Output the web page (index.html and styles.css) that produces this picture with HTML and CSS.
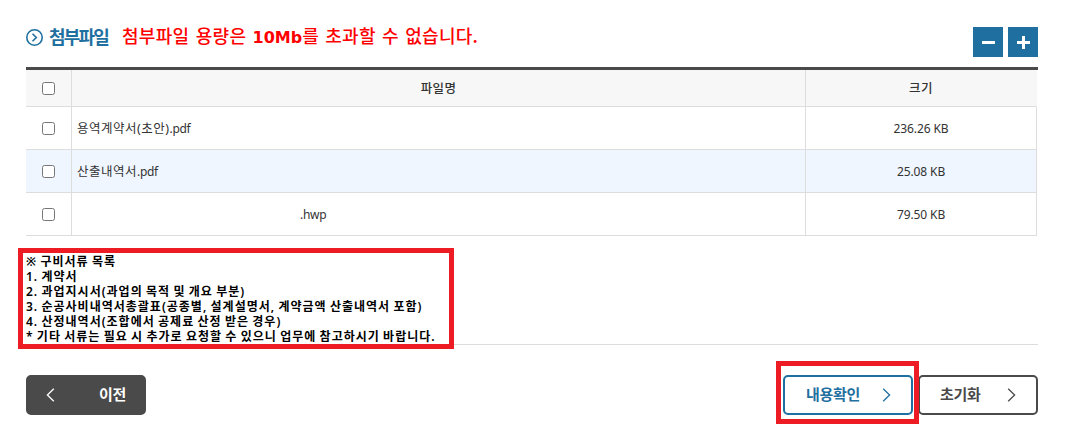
FILE: index.html
```
<!DOCTYPE html>
<html lang="ko">
  <head>
    <meta charset="utf-8">
    <title>첨부파일</title>
    <link rel="stylesheet" href="styles.css">
  </head>
  <body>
    <div class="container">
      <div class="file-header">
        <svg class="bullet" width="17" height="17" viewBox="0 0 17 17">
          <circle cx="8.5" cy="8.5" r="7.7" />
          <path d="M6.5 4.8L10.3 8.5L6.5 12.2" />
        </svg>
        <h2>첨부파일</h2>
        <p class="warning">첨부파일 용량은 <b>10Mb</b>를 초과할 수 없습니다.</p>
        <div class="file-buttons">
          <button type="button" aria-label="파일 삭제">
            <svg width="30" height="30"><path d="M9 15.5h13" /></svg>
          </button>
          <button type="button" aria-label="파일 추가">
            <svg width="30" height="30"><path d="M9 15.5h13M15.5 9v13" /></svg>
          </button>
        </div>
      </div>

      <div class="table-wrap">
        <table>
          <thead>
            <tr>
              <th class="check"><input type="checkbox"></th>
              <th class="name">파일명</th>
              <th class="size">크기</th>
            </tr>
          </thead>
          <tbody>
            <tr>
              <td class="check"><input type="checkbox"></td>
              <td class="name">용역계약서(초안)<span class="ext">.pdf</span></td>
              <td class="size">236.26 KB</td>
            </tr>
            <tr class="even">
              <td class="check"><input type="checkbox"></td>
              <td class="name">산출내역서<span class="ext">.pdf</span></td>
              <td class="size">25.08 KB</td>
            </tr>
            <tr>
              <td class="check"><input type="checkbox"></td>
              <td class="name hidden-name"><span class="ext">.hwp</span></td>
              <td class="size">79.50 KB</td>
            </tr>
          </tbody>
        </table>
      </div>

      <div class="notes">
        <p>※ 구비서류 목록</p>
        <p>1. 계약서</p>
        <p>2. 과업지시서(과업의 목적 및 개요 부분)</p>
        <p>3. 순공사비내역서총괄표(공종별, 설계설명서, 계약금액 산출내역서 포함)</p>
        <p>4. 산정내역서(조합에서 공제료 산정 받은 경우)</p>
        <p>* 기타 서류는 필요 시 추가로 요청할 수 있으니 업무에 참고하시기 바랍니다.</p>
        <div class="mark notes-mark"></div>
      </div>

      <div class="actions">
        <button type="button" class="btn prev">
          <svg width="9" height="14" viewBox="0 0 9 14"><path d="M7.8 0.8L1.4 7L7.8 13.2" /></svg>
          <span>이전</span>
        </button>
        <div class="confirm-wrap">
          <button type="button" class="btn confirm">
            <span>내용확인</span>
            <svg width="9" height="14" viewBox="0 0 9 14"><path d="M1.2 0.8L7.6 7L1.2 13.2" /></svg>
          </button>
          <div class="mark confirm-mark"></div>
        </div>
        <button type="button" class="btn reset">
          <span>초기화</span>
          <svg width="9" height="14" viewBox="0 0 9 14"><path d="M1.2 0.8L7.6 7L1.2 13.2" /></svg>
        </button>
      </div>
    </div>
  </body>
</html>
```
FILE: styles.css
```
* {
  box-sizing: border-box;
}
body {
  margin: 0;
  background-color: #fff;
  color: #333;
  font-family: "Noto Sans", "Noto Sans CJK KR", sans-serif;
  font-size: 12px;
}
h2,
p {
  margin: 0;
}
button {
  padding: 0;
  border: 0;
  font-family: inherit;
}
svg {
  display: block;
  fill: none;
}
.container {
  width: 1012px;
  min-height: 433px;
  margin-left: 26px;
}

/* title row */
.file-header {
  display: flex;
  align-items: flex-start;
  height: 67px;
  padding-top: 27px;
}
.bullet {
  margin-top: 2px;
  stroke: #1f70a0;
  stroke-width: 1.6;
}
h2 {
  width: 73px;
  margin-left: 6px;
  color: #1f70a0;
  font-size: 18px;
  line-height: 20px;
  letter-spacing: -1.8px;
  white-space: nowrap;
}
.warning {
  margin-top: -2px;
  color: #f00;
  font-family: "Noto Sans CJK KR", sans-serif;
  font-size: 18px;
  font-weight: 500;
  line-height: 20px;
  letter-spacing: 0.3px;
  word-spacing: 0.9px;
  white-space: nowrap;
}
.warning b {
  font-family: "DejaVu Sans", sans-serif;
  font-size: 16px;
  letter-spacing: 0;
}
.file-buttons {
  display: flex;
  gap: 5px;
  margin-left: auto;
}
.file-buttons button {
  width: 30px;
  height: 30px;
  background-color: #1f70a0;
}
.file-buttons svg {
  stroke: #fff;
  stroke-width: 3;
}

/* file list */
.table-wrap {
  border-top: 3px solid #4a4a4a;
}
table {
  width: 1011px;
  border-collapse: separate;
  border-spacing: 0;
  table-layout: fixed;
}
th,
td {
  height: 43px;
  padding: 0;
  border-right: 1px solid #ddd;
  border-bottom: 1px solid #ddd;
  text-align: center;
}
th {
  height: 37px;
  background-color: #f7f7f7;
  font-size: 12.5px;
  font-weight: 500;
  line-height: 16px;
  letter-spacing: 0.4px;
}
th.name,
th.size,
td.name {
  padding-top: 2px;
}
th.size {
  border-right-color: #f7f7f7;
}
.check {
  width: 46px;
}
.size {
  width: 231px;
}
td.name {
  padding-left: 5px;
  font-size: 12.5px;
  line-height: 16px;
  letter-spacing: 0.5px;
  text-align: left;
}
td.size,
.ext {
  font-size: 12px;
  letter-spacing: -0.1px;
}
td .ext {
  letter-spacing: -0.3px;
}
td.hidden-name {
  padding-left: 228px;
}
.even td {
  background-color: #eff6ff;
}
input {
  display: block;
  width: 13px;
  height: 13px;
  margin: 0 auto;
}

/* required documents */
.notes {
  position: relative;
  height: 109px;
  padding-top: 18px;
  border-bottom: 1px solid #ddd;
  color: #000;
  font-weight: 600;
  line-height: 15px;
  letter-spacing: 1px;
  word-spacing: -0.8px;
  white-space: nowrap;
}
.mark {
  position: absolute;
  border: 5px solid #ed1c24;
}
.notes-mark {
  top: 12px;
  left: -8px;
  width: 436px;
  height: 101px;
}

/* bottom buttons */
.actions {
  display: flex;
  padding-top: 30px;
}
.btn {
  display: flex;
  align-items: center;
  justify-content: space-between;
  height: 40px;
  padding-bottom: 3px;
  border: 2px solid #4a4a4a;
  border-radius: 5px;
  background-color: #fff;
  color: #4a4a4a;
  font-size: 15px;
  font-weight: 700;
  letter-spacing: -0.3px;
}
.btn svg {
  margin-top: 3px;
  stroke: currentColor;
  stroke-width: 1.3;
}
.prev {
  width: 120px;
  padding-right: 18px;
  padding-left: 18px;
  background-color: #4a4a4a;
  color: #fff;
}
.confirm-wrap {
  position: relative;
  margin-left: auto;
}
.confirm {
  width: 130px;
  padding-right: 20px;
  padding-left: 21px;
  border-color: #1f70a0;
  color: #1f70a0;
}
.confirm-mark {
  top: -14px;
  left: -7px;
  width: 143px;
  height: 63px;
}
.reset {
  width: 120px;
  margin-left: 5px;
  padding-right: 20px;
  padding-left: 20px;
}
```
